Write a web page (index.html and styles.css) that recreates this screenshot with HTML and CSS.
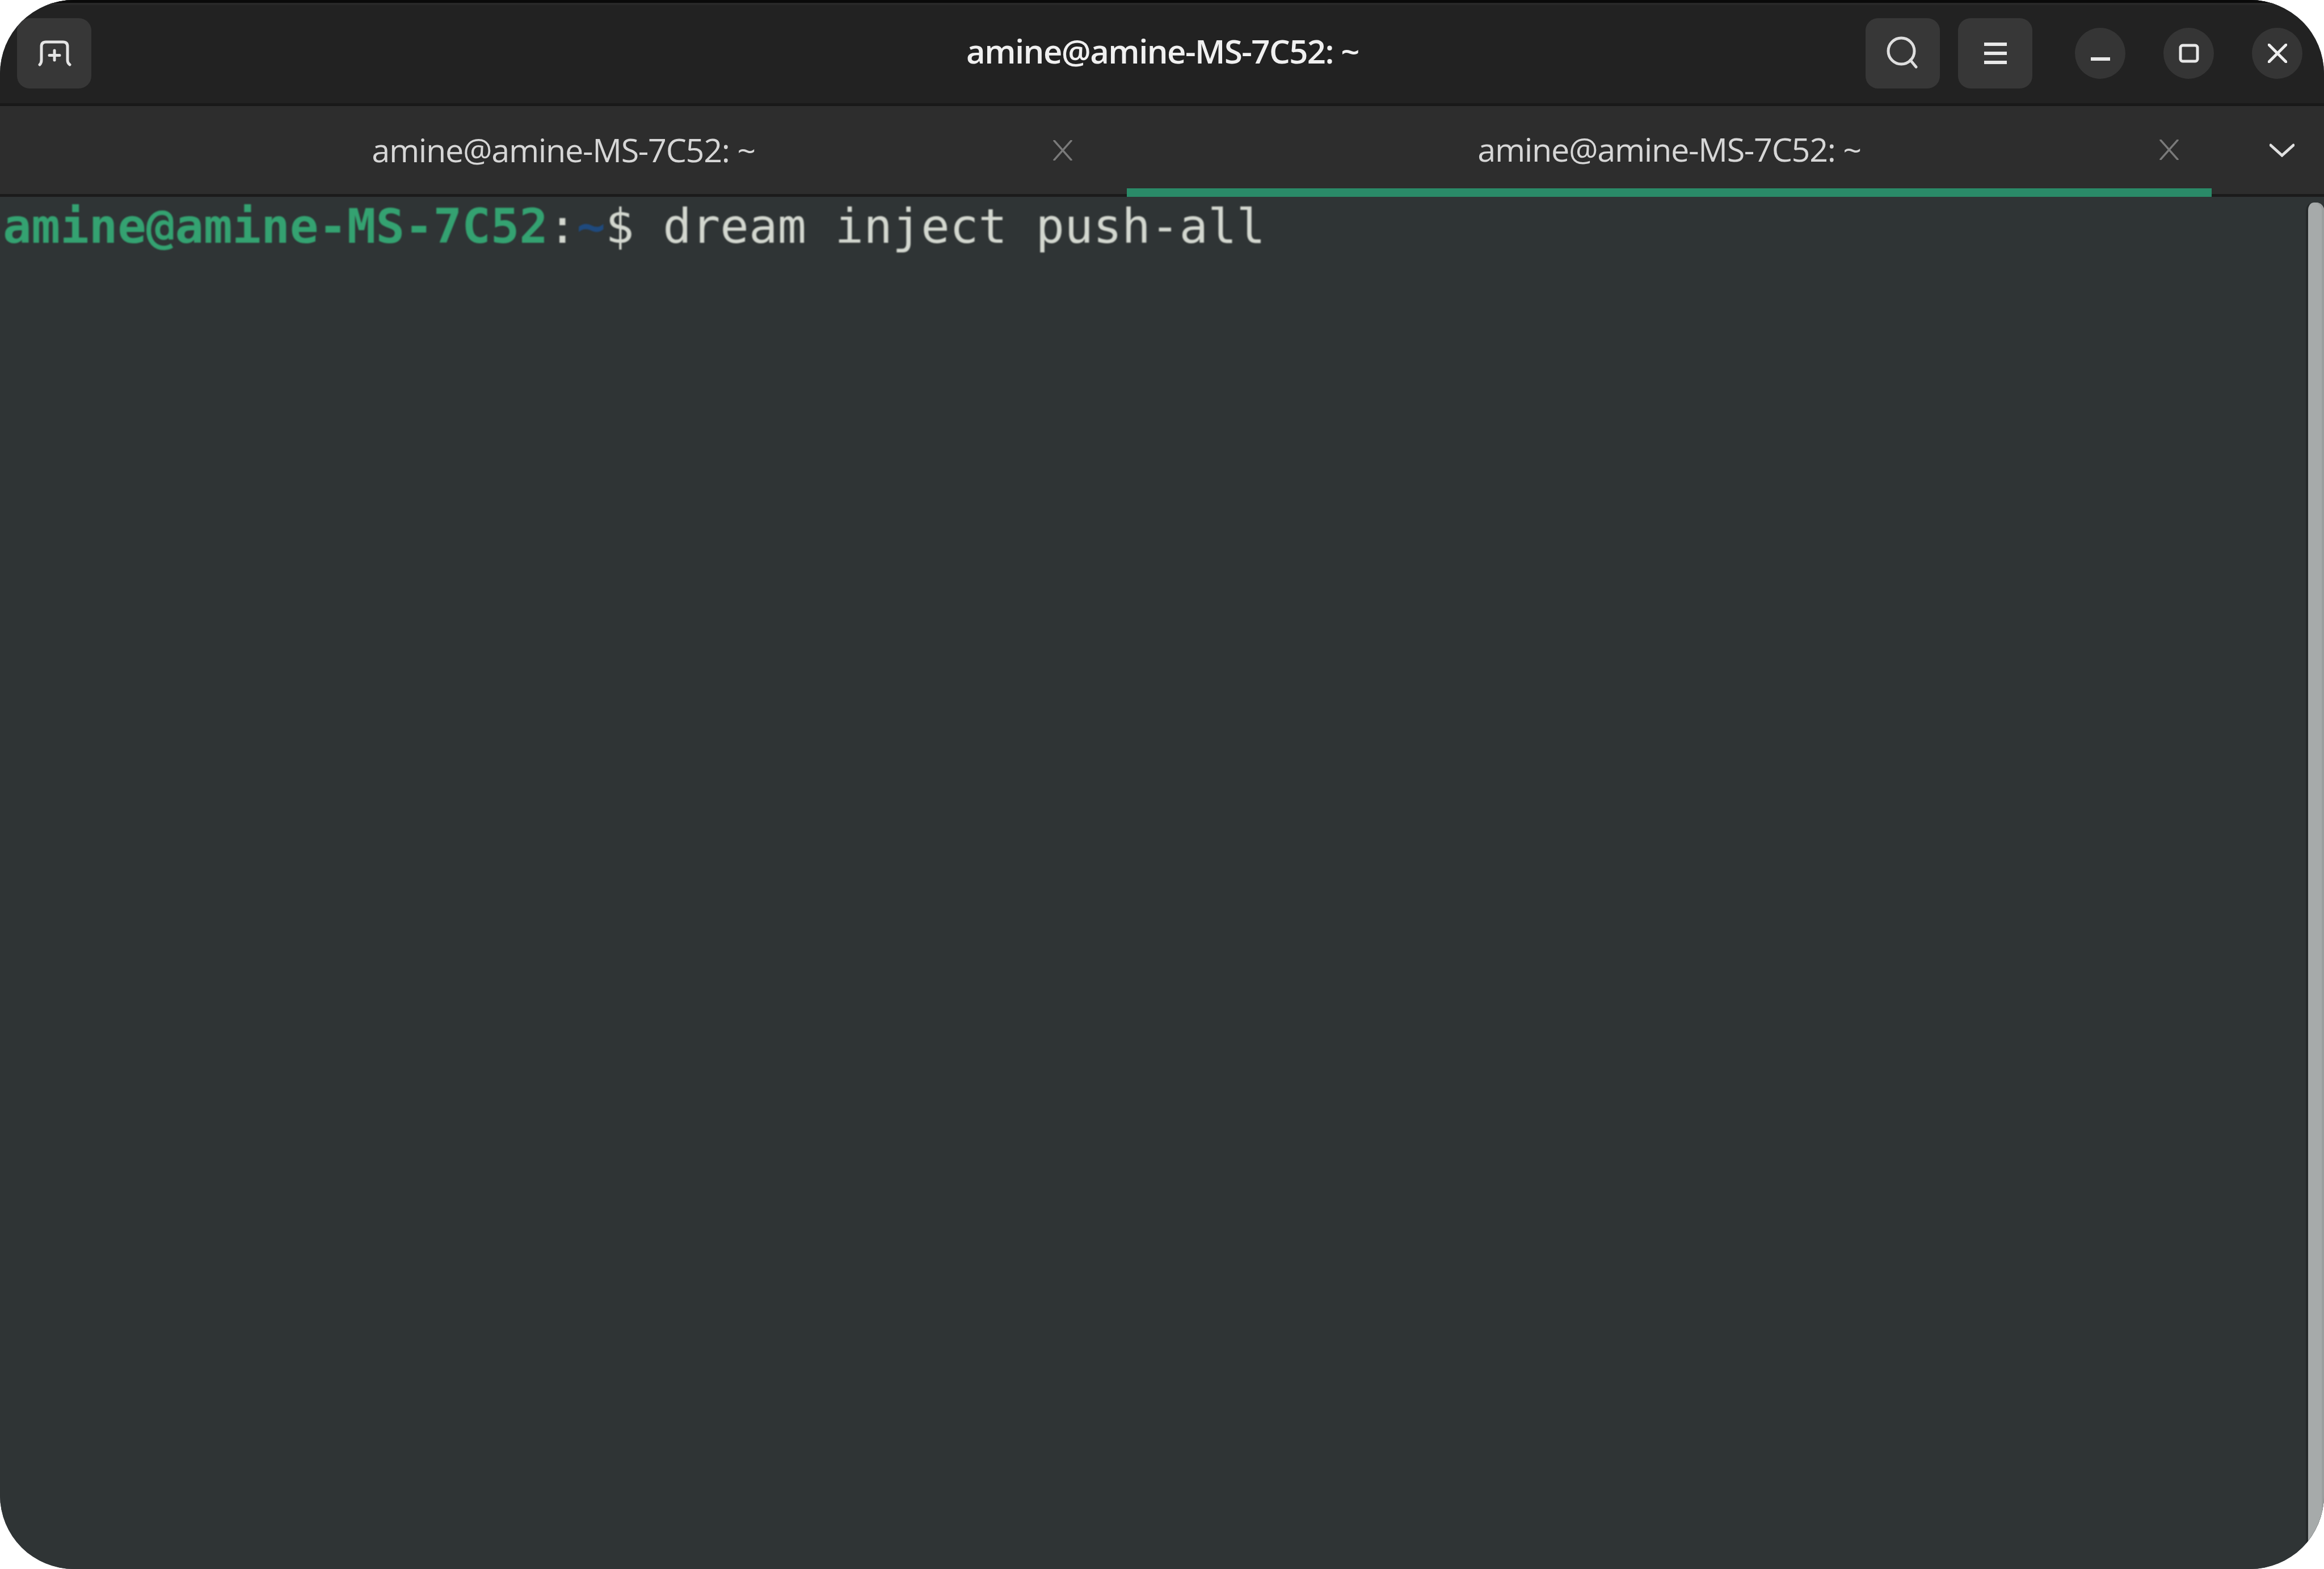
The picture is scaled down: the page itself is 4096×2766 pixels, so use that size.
FILE: index.html
```html
<!DOCTYPE html>
<html lang="en">
<head>
<meta charset="utf-8">
<title>amine@amine-MS-7C52: ~</title>
<link rel="stylesheet" href="styles.css">
</head>
<body>
<div class="window">
  <header class="headerbar">
    <div class="head-left">
      <button class="btn">
        <svg class="ico-new" viewBox="0 0 60 48"><path d="M4 44 Q7 41 7 36 V12 Q7 4 15 4 H45 Q53 4 53 12 V36 Q53 41 57 44"/><path d="M30 19 V36 M21 27.500 H39"/></svg>
      </button>
    </div>
    <div class="title">amine@amine-MS-7C52: ~</div>
    <div class="head-right">
      <button class="btn">
        <svg class="ico-search" viewBox="0 0 64 64"><ellipse cx="29" cy="28" rx="23" ry="23"/><path d="M45 44 L55 56"/></svg>
      </button>
      <button class="btn btn-menu">
        <svg class="ico-menu" viewBox="0 0 40 38"><path d="M0 3 H40 M0 19 H40 M0 35 H40"/></svg>
      </button>
      <div class="wm">
        <button class="circle">
          <svg class="ico-min" viewBox="0 0 34 40"><path d="M1 30 H33"/></svg>
        </button>
        <button class="circle">
          <svg class="ico-max" viewBox="0 0 36 34"><rect x="3" y="3" width="30" height="28" rx="4"/></svg>
        </button>
        <button class="circle">
          <svg class="ico-close" viewBox="0 0 34 34"><path d="M2 2 L32 32 M32 2 L2 32"/></svg>
        </button>
      </div>
    </div>
  </header>
  <nav class="tabbar">
    <div class="tab">
      <span></span>
      <span class="tab-label">amine@amine-MS-7C52: ~</span>
      <svg class="tab-x" viewBox="0 0 34 36"><path d="M2 1 L32 35 M32 1 L2 35"/></svg>
    </div>
    <div class="tab tab-active">
      <span></span>
      <span class="tab-label">amine@amine-MS-7C52: ~</span>
      <svg class="tab-x" viewBox="0 0 34 36"><path d="M2 1 L32 35 M32 1 L2 35"/></svg>
    </div>
    <div class="tab-more">
      <svg class="ico-chev" viewBox="0 0 44 24"><path d="M2 3 L22 21 L42 3"/></svg>
    </div>
  </nav>
  <main class="terminal">
    <div class="output">
      <div class="line"><span class="host">amine@amine-MS-7C52</span><span class="colon">:</span><span class="cwd">~</span>$ dream inject push-all</div>
    </div>
    <div class="scrollbar"></div>
  </main>
</div>
</body>
</html>
```
FILE: styles.css
```css
* { box-sizing: border-box; }
html, body { margin: 0; padding: 0; background: #fff; }
body { width: 4096px; height: 2766px; overflow: hidden; }

.window {
  width: 4096px;
  height: 2766px;
  display: flex;
  flex-direction: column;
  border-radius: 130px;
  overflow: hidden;
  background: #2f3435;
}

.headerbar {
  height: 187px;
  flex: none;
  display: grid;
  grid-template-columns: 1fr auto 1fr;
  align-items: center;
  background: #222222;
  border-top: 5px solid #0a0a0a;
  border-bottom: 5px solid #191919;
  padding: 0 38px 0 30px;
  box-shadow: inset 0 4px 0 #282828;
}
.head-left { display: flex; }
.head-right { display: flex; justify-content: flex-end; align-items: center; gap: 32px; }
.title {
  font: 600 58px/1 "Open Sans", sans-serif;
  letter-spacing: -1.55px;
  color: #f0f0f0;
  padding-left: 10px;
  padding-bottom: 8px;
  filter: blur(0.7px);
}

.btn {
  width: 131px;
  height: 124px;
  border: 0;
  padding: 0;
  border-radius: 22px;
  background: #373737;
  display: flex;
  align-items: center;
  justify-content: center;
}
.wm { display: flex; align-items: center; gap: 67px; margin-left: 43px; }
.circle {
  width: 89px;
  height: 90px;
  border: 0;
  padding: 0;
  border-radius: 50%;
  background: #353535;
  display: flex;
  align-items: center;
  justify-content: center;
}

svg { display: block; fill: none; stroke-linecap: round; }
.ico-new { width: 60px; height: 48px; stroke: #e4e4e4; stroke-width: 5; filter: blur(0.6px); }
.ico-search { width: 64px; height: 64px; stroke: #dedede; stroke-width: 5; filter: blur(0.6px); }
.ico-menu { width: 40px; height: 38px; stroke: #e8e8e8; stroke-width: 6; filter: blur(0.6px); }
.ico-menu path { stroke-linecap: butt; }
.ico-min { width: 34px; height: 40px; stroke: #e8e8e8; stroke-width: 6; filter: blur(0.6px); }
.ico-max { width: 36px; height: 34px; stroke: #e8e8e8; stroke-width: 5; filter: blur(0.6px); }
.ico-close { width: 34px; height: 34px; stroke: #efefef; stroke-width: 5; filter: blur(0.6px); }

.tabbar {
  height: 160px;
  flex: none;
  display: flex;
  background: #2d2d2d;
}
.tab {
  width: 1986px;
  height: 160px;
  flex: none;
  display: grid;
  grid-template-columns: 1fr auto 1fr;
  align-items: center;
  padding: 0 96px;
  border-bottom: 5px solid #1b1b1b;
}
.tab-active {
  width: 1912px;
  padding: 9px 58px 0;
  border-bottom: 15px solid #2a8a68;
}
.tab-label {
  font: 400 57.500px/1 "Open Sans", sans-serif;
  letter-spacing: -1.3px;
  color: #d6d6d6;
  filter: blur(0.6px);
}
.tab-x {
  width: 34px;
  height: 36px;
  justify-self: end;
  stroke: #7a7a7a;
  stroke-width: 3.500;
  filter: blur(0.5px);
}
.tab-more {
  flex: 1;
  height: 160px;
  display: flex;
  align-items: center;
  justify-content: flex-end;
  padding: 0 52px 0 0;
  border-bottom: 5px solid #1b1b1b;
}
.ico-chev { width: 44px; height: 24px; stroke: #e0e0e0; stroke-width: 5; filter: blur(0.5px); }

.terminal {
  flex: 1;
  display: flex;
  background: #2f3435;
}
.output {
  flex: 1;
  padding: 2px 0 0 5px;
}
.line {
  font: 400 84px/100px "DejaVu Sans Mono", monospace;
  color: #d3d7cf;
  white-space: pre;
  filter: blur(0.8px);
}
.host { font-weight: 700; color: #34a271; }
.colon { color: #d3d7cf; }
.cwd { font-weight: 700; color: #1f4a7e; }

.scrollbar {
  width: 32px;
  flex: none;
  margin-top: 10px;
  border-left: 4px solid #25292a;
  background: #a6aaaa;
  border-top-left-radius: 14px;
  border-top-right-radius: 14px;
  box-shadow: inset -4px 0 0 #9a9e9e;
}
```
